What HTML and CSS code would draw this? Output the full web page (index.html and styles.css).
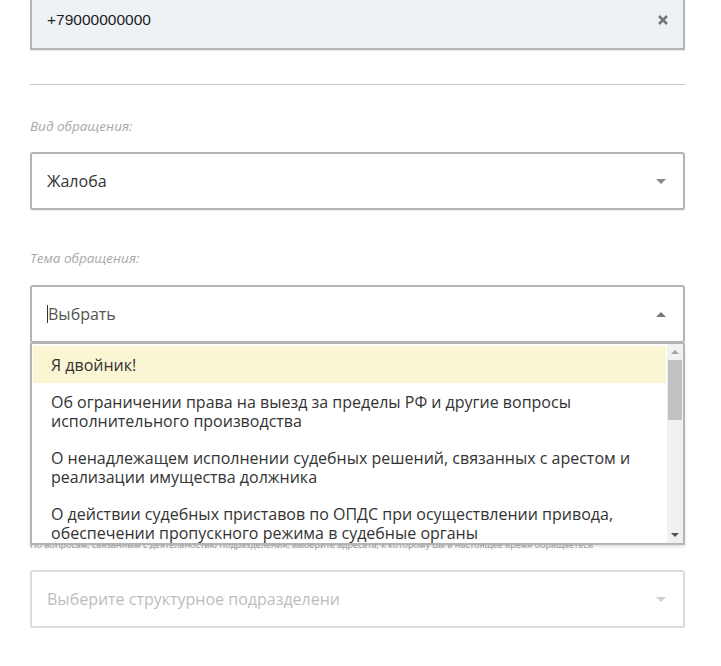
FILE: index.html
```html
<!DOCTYPE html>
<html lang="ru">
<head>
<meta charset="utf-8">
<title>Обращение</title>
<link rel="stylesheet" href="styles.css">
</head>
<body>
<div class="page">
  <div class="field filled">
    <span class="value phone">+79000000000</span>
    <svg class="clear" width="12" height="12" viewBox="0 0 12 12"><path d="M2 2 L10 10 M10 2 L2 10" stroke="#777" stroke-width="2.6" stroke-linecap="butt"/></svg>
  </div>
  <div class="divider"></div>
  <div class="label first">Вид обращения:</div>
  <div class="field select">
    <span class="value">Жалоба</span>
    <span class="arrow down"></span>
  </div>
  <div class="label second">Тема обращения:</div>
  <div class="combo">
    <div class="field select open">
      <span class="value search"><span class="caret"></span>Выбрать</span>
      <span class="arrow up"></span>
    </div>
    <div class="dropdown">
      <ul class="options">
        <li class="option active">Я двойник!</li>
        <li class="option">Об ограничении права на выезд за пределы РФ и другие вопросы исполнительного производства</li>
        <li class="option">О ненадлежащем исполнении судебных решений, связанных с арестом и реализации имущества должника</li>
        <li class="option">О действии судебных приставов по ОПДС при осуществлении привода, обеспечении пропускного режима в судебные органы</li>
        <li class="option">Иные вопросы</li>
      </ul>
      <div class="scrollbar">
        <span class="sb-arrow sb-up"></span>
        <span class="sb-track"><span class="sb-thumb"></span></span>
        <span class="sb-arrow sb-down"></span>
      </div>
    </div>
  </div>
  <div class="hidden-area">
    <p class="hint">По вопросам, связанным с деятельностью подразделения, выберите адресата, к которому Вы в настоящее время обращаетесь</p>
  </div>
  <div class="field select disabled">
    <span class="value placeholder">Выберите структурное подразделени</span>
    <span class="arrow down"></span>
  </div>
</div>
</body>
</html>
```
FILE: styles.css
```css
* { box-sizing: border-box; }
html, body { margin: 0; padding: 0; background: #fff; }
body { font-family: "Open Sans", "Noto Sans", sans-serif; color: #333; overflow: hidden; }

.page {
  width: 655px;
  margin-left: 30px;
  display: flex;
  flex-direction: column;
}

.field {
  height: 58px;
  border: 2px solid #b4b4b4;
  border-radius: 3px;
  display: flex;
  align-items: center;
  justify-content: space-between;
  padding: 0 15px;
  background: #fff;
  box-shadow: 0 1px 1px rgba(0,0,0,0.08);
}
.field.filled {
  margin-top: -10px;
  height: 60px;
  background: #eef2f5;
  border-radius: 0;
  padding-right: 15px;
}
.value { font-size: 16px; line-height: 20px; color: #333; white-space: nowrap; overflow: hidden; }
.value.phone { font-family: "Liberation Sans", Arial, sans-serif; font-size: 15.5px; color: #222; }
.clear { margin-right: -1px; }

.divider { margin-top: 34px; height: 1px; background: #c9c9c9; }

.label {
  font-size: 13.5px;
  line-height: 16px;
  font-style: italic;
  color: #a8a8a8;
  margin-bottom: 18px;
}
.label.first { margin-top: 33px; }
.label.second { margin-top: 40px; margin-bottom: 19px; }

.arrow { width: 0; height: 0; border-left: 5px solid transparent; border-right: 5px solid transparent; margin-right: 2px; }
.arrow.down { border-top: 5px solid #888; }
.arrow.up { border-bottom: 5px solid #777; }

.search { display: flex; align-items: center; color: #555; }
.caret { width: 1px; height: 18px; background: #333; margin-right: 0; }

.combo { position: relative; }
.dropdown {
  position: absolute;
  left: 0;
  right: 0;
  top: 100%;
  height: 202px;
  border: 2px solid #b4b4b4;
  border-top: 1px solid #b4b4b4;
  background: #fff;
  display: flex;
  overflow: hidden;
  box-shadow: 0 2px 3px rgba(0,0,0,0.12);
  z-index: 2;
}
.options {
  list-style: none;
  margin: 0;
  padding: 2px 1px 0 1px;
  flex: 1;
  overflow: hidden;
}
.option {
  padding: 10px 18px 8px;
  font-size: 16px;
  line-height: 19px;
  color: #333;
}
.option.active { background: #faf5d3; }

.scrollbar {
  width: 16px;
  background: #f1f1f1;
  display: flex;
  flex-direction: column;
  align-items: center;
}
.sb-arrow { width: 0; height: 0; border-left: 4px solid transparent; border-right: 4px solid transparent; }
.sb-up { border-bottom: 4px solid #a3a3a3; margin-top: 6px; margin-bottom: 6px; }
.sb-down { border-top: 4px solid #505050; margin-bottom: 6px; margin-top: 6px; }
.sb-track { flex: 1; width: 100%; padding: 0 1px; }
.sb-thumb { display: block; height: 60px; background: #c1c1c1; }

.hidden-area { margin-top: 197px; height: 10px; }
.hint {
  margin: 0;
  font-size: 9px;
  line-height: 10px;
  color: #999;
  white-space: nowrap;
  overflow: hidden;
}

.field.disabled {
  margin-top: 20px;
  border-color: #dcdcdc;
}
.placeholder { color: #bdbdbd; width: 292px; }
.field.disabled .arrow.down { border-top-color: #cfcfcf; }
```
